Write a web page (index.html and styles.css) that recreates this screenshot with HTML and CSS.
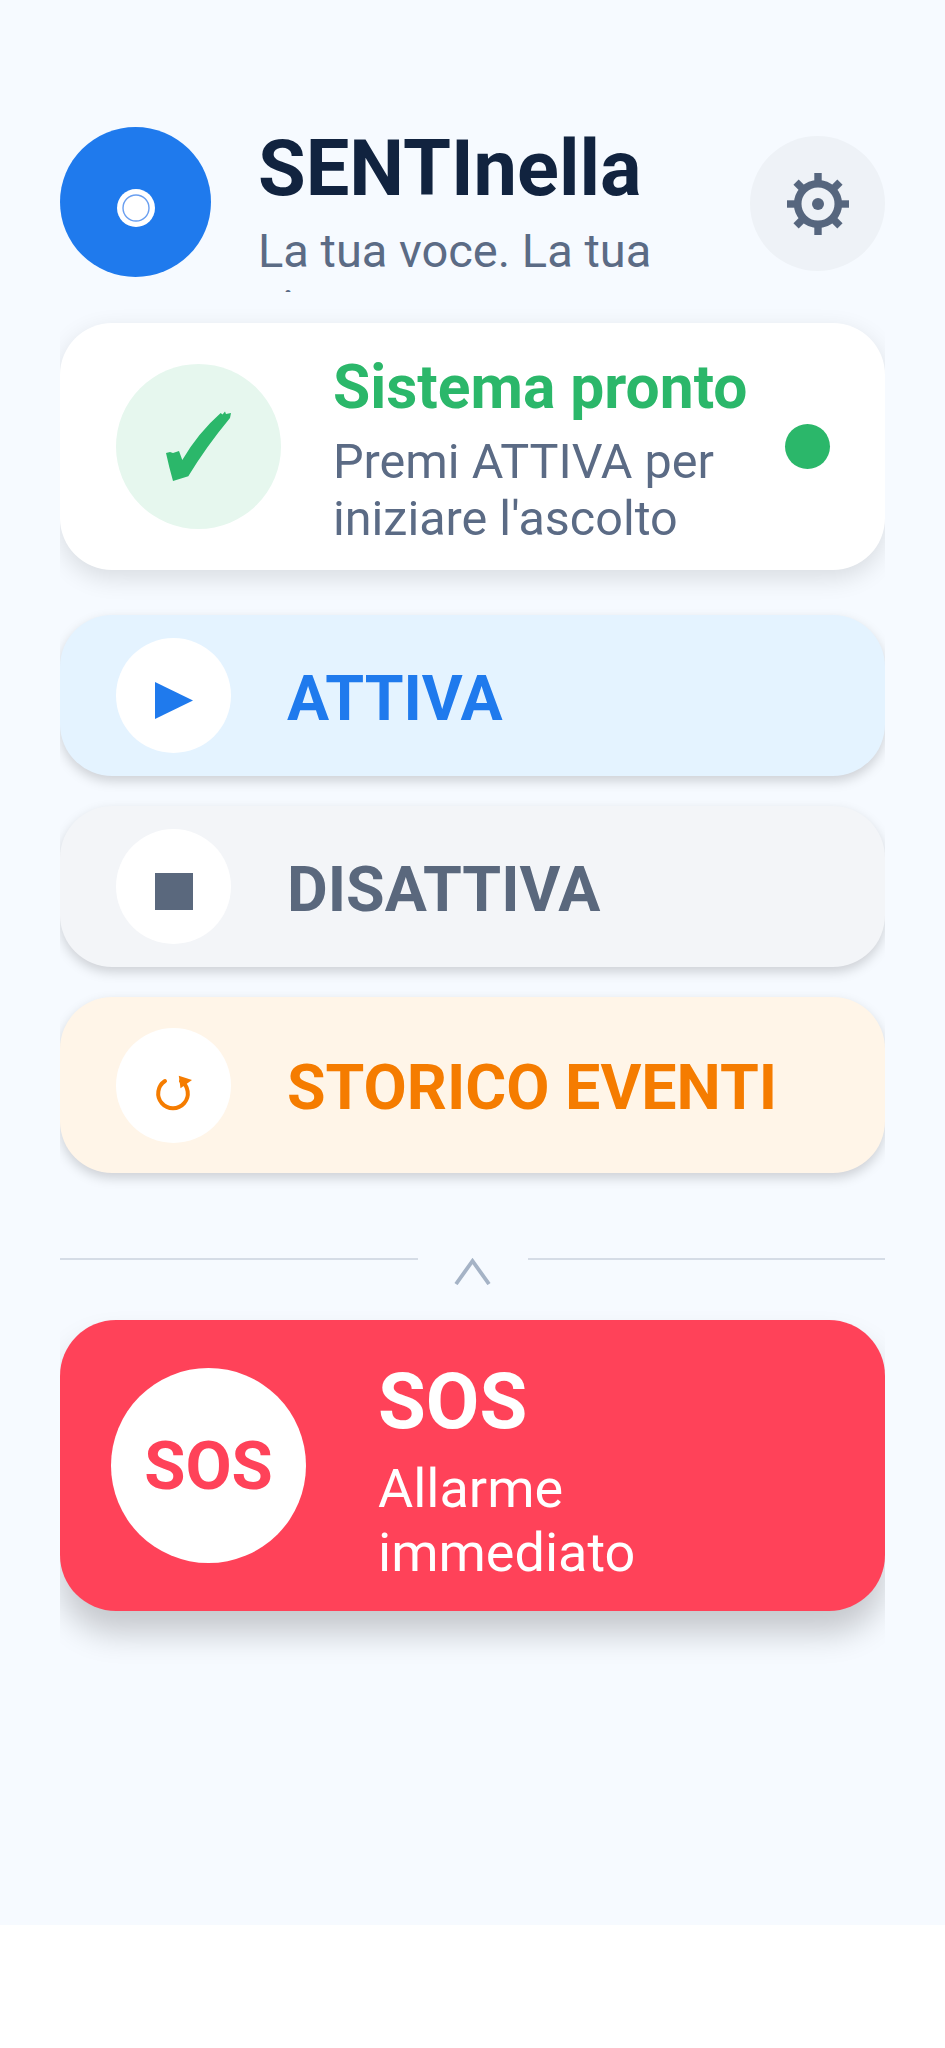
FILE: index.html
```html
<!DOCTYPE html>
<html lang="it">
<head>
<meta charset="utf-8">
<title>SENTInella</title>
<link rel="stylesheet" href="styles.css">
</head>
<body>
<main class="screen">
  <header class="header">
    <div class="logo">
      <svg class="logo-mark" width="38" height="38" viewBox="0 0 38 38"><circle cx="19" cy="19" r="19" fill="#fff"/><circle cx="19" cy="19" r="13" fill="#fff" stroke="#6a9ff0" stroke-width="1.4"/></svg>
    </div>
    <div class="brand">
      <h1 class="brand-title">SENTInella</h1>
      <p class="brand-sub">La tua voce. La tua sicurezza.</p>
    </div>
    <button class="settings" aria-label="Impostazioni">
      <svg width="62" height="62" viewBox="0 0 62 62"><g fill="#56667e"><rect x="27.3" y="0" width="7.4" height="12"/><rect x="27.3" y="50" width="7.4" height="12"/><rect x="0" y="27.3" width="12" height="7.4"/><rect x="50" y="27.3" width="12" height="7.4"/><rect x="27.3" y="0" width="7.4" height="12" transform="rotate(45 31 31)"/><rect x="27.3" y="0" width="7.4" height="12" transform="rotate(135 31 31)"/><rect x="27.3" y="0" width="7.4" height="12" transform="rotate(225 31 31)"/><rect x="27.3" y="0" width="7.4" height="12" transform="rotate(315 31 31)"/><circle cx="31" cy="31" r="6"/></g><circle cx="31" cy="31" r="20.3" fill="none" stroke="#56667e" stroke-width="7.6"/></svg>
    </button>
  </header>
  <div class="content">
    <section class="status">
      <div class="status-icon">
        <svg width="66" height="72" viewBox="0 0 66 72"><path fill="#2bb76a" d="M0 42 L4 41 L7 42 L13 40 L16.300 49 Q32 22 54.700 2 L56.500 3.500 L59 0.500 L60 3 L65 2 L64 7 Q40 36 22.300 65.300 L7 70 Q3 56 0 42 Z"/></svg>
      </div>
      <div class="status-text">
        <h2 class="status-title">Sistema pronto</h2>
        <p class="status-sub">Premi ATTIVA per iniziare l'ascolto</p>
      </div>
      <span class="status-dot"></span>
    </section>
    <div class="actions">
      <button class="action action-on">
        <span class="action-icon"><svg class="icon-low" width="38" height="37" viewBox="0 0 38 37"><path fill="#1f7aed" d="M0 0 L38 18.5 L0 37 Z"/></svg></span>
        <span class="action-label">ATTIVA</span>
      </button>
      <button class="action action-off">
        <span class="action-icon"><svg class="icon-low" width="38" height="37" viewBox="0 0 38 37"><rect width="38" height="37" fill="#5a687d"/></svg></span>
        <span class="action-label">DISATTIVA</span>
      </button>
      <button class="action action-log">
        <span class="action-icon"><svg class="icon-lower" width="37" height="37" viewBox="-1 0 37 37"><path fill="none" stroke="#f57c00" stroke-width="4" stroke-linecap="round" d="M9 7 A14.800 14.800 0 1 0 25 7"/><path fill="#f57c00" d="M22.800 1.700 L36 6 L24.500 14.300 Z"/></svg></span>
        <span class="action-label">STORICO EVENTI</span>
      </button>
    </div>
    <div class="divider">
      <span class="divider-line"></span>
      <svg class="chevron" width="37" height="27" viewBox="0 0 37 27"><path fill="none" stroke="#a5b3c6" stroke-width="3.8" d="M2 26 L18.500 3 L35 26"/></svg>
      <span class="divider-line"></span>
    </div>
    <button class="sos">
      <span class="sos-badge">SOS</span>
      <span class="sos-text">
        <span class="sos-title">SOS</span>
        <span class="sos-sub">Allarme immediato</span>
      </span>
    </button>
  </div>
</main>
</body>
</html>
```
FILE: styles.css
```css
* { box-sizing: border-box; }
html, body { margin: 0; padding: 0; background: #fff; }
body { font-family: Roboto, "Noto Sans", sans-serif; }
h1, h2, p { margin: 0; }
button { font-family: inherit; border: 0; padding: 0; }

.screen {
  height: 1925px;
  padding: 127px 60px 0;
  background: #f6faff;
}

.header {
  display: flex;
  align-items: flex-start;
  height: 166px;
  margin-bottom: 30px;
}
.logo {
  flex: none;
  width: 151px;
  height: 150px;
  margin-right: 47px;
  border-radius: 50%;
  background: #1f7aed;
  display: flex;
  align-items: center;
  justify-content: center;
}
.logo-mark { margin-top: 12px; }
.brand {
  flex: 1;
  height: 165px;
  overflow: hidden;
}
.brand-title {
  font-size: 77.500px;
  line-height: 83px;
  font-weight: 700;
  color: #11233f;
}
.brand-sub {
  width: 420px;
  margin-top: 13px;
  font-size: 47px;
  line-height: 56px;
  color: #5b6b85;
}
.settings {
  flex: none;
  width: 135px;
  height: 135px;
  margin-top: 9px;
  border-radius: 50%;
  background: #eef2f7;
  display: flex;
  align-items: center;
  justify-content: center;
}

.content { overflow-x: clip; }

.status {
  display: flex;
  align-items: center;
  height: 247px;
  padding: 0 55px 0 56px;
  border-radius: 52px;
  background: #fff;
  box-shadow: 0 8px 24px rgba(0, 0, 0, 0.12);
}
.status-icon {
  flex: none;
  width: 165px;
  height: 165px;
  margin-right: 52px;
  border-radius: 50%;
  background: #e6f7ee;
  display: flex;
  align-items: center;
  justify-content: center;
}
.status-text { flex: 1; padding-right: 30px; }
.status-title {
  margin-bottom: 4px;
  font-size: 60.500px;
  line-height: 82px;
  font-weight: 700;
  color: #2bb76a;
}
.status-sub {
  font-size: 48.500px;
  line-height: 57px;
  color: #5b6b85;
}
.status-dot {
  flex: none;
  width: 45px;
  height: 45px;
  border-radius: 50%;
  background: #2bb76a;
}

.actions {
  display: flex;
  flex-direction: column;
  gap: 30px;
  margin-top: 45px;
}
.action {
  display: flex;
  align-items: center;
  width: 100%;
  height: 161px;
  padding-left: 56px;
  border-radius: 52px;
  box-shadow: 0 5px 12px rgba(0, 0, 0, 0.17);
}
.action-log { height: 176px; }
.action-on { background: #e4f3ff; color: #1f7aed; }
.action-off { background: #f3f5f8; color: #5a687d; }
.action-log { background: #fff5e8; color: #f57c00; }
.action-icon {
  flex: none;
  width: 115px;
  height: 115px;
  margin-right: 56px;
  border-radius: 50%;
  background: #fff;
  display: flex;
  align-items: center;
  justify-content: center;
}
.icon-low { margin-top: 10px; }
.icon-lower { margin-top: 14px; }
.action-label {
  margin-top: 6px;
  font-size: 62.700px;
  line-height: 74px;
  font-weight: 700;
}

.divider {
  display: flex;
  align-items: flex-start;
  height: 62px;
  margin-top: 85px;
}
.divider-line {
  flex: 1;
  height: 2px;
  background: #d5dce6;
}
.chevron { flex: none; margin: 0 37px 0 36px; }

.sos {
  display: flex;
  align-items: center;
  width: 100%;
  height: 291px;
  margin-bottom: 70px;
  padding-left: 51px;
  border-radius: 56px;
  background: #ff4259;
  box-shadow: 0 22px 32px rgba(0, 0, 0, 0.2);
  color: #fff;
  text-align: left;
}
.sos-badge {
  flex: none;
  width: 195px;
  height: 195px;
  margin-right: 72px;
  border-radius: 50%;
  background: #fff;
  color: #ff4259;
  font-size: 67px;
  font-weight: 700;
  display: flex;
  align-items: center;
  justify-content: center;
}
.sos-text { display: block; width: 340px; }
.sos-title {
  display: block;
  font-size: 77.700px;
  line-height: 110px;
  font-weight: 700;
}
.sos-sub {
  display: block;
  font-size: 54px;
  line-height: 64px;
}
```
